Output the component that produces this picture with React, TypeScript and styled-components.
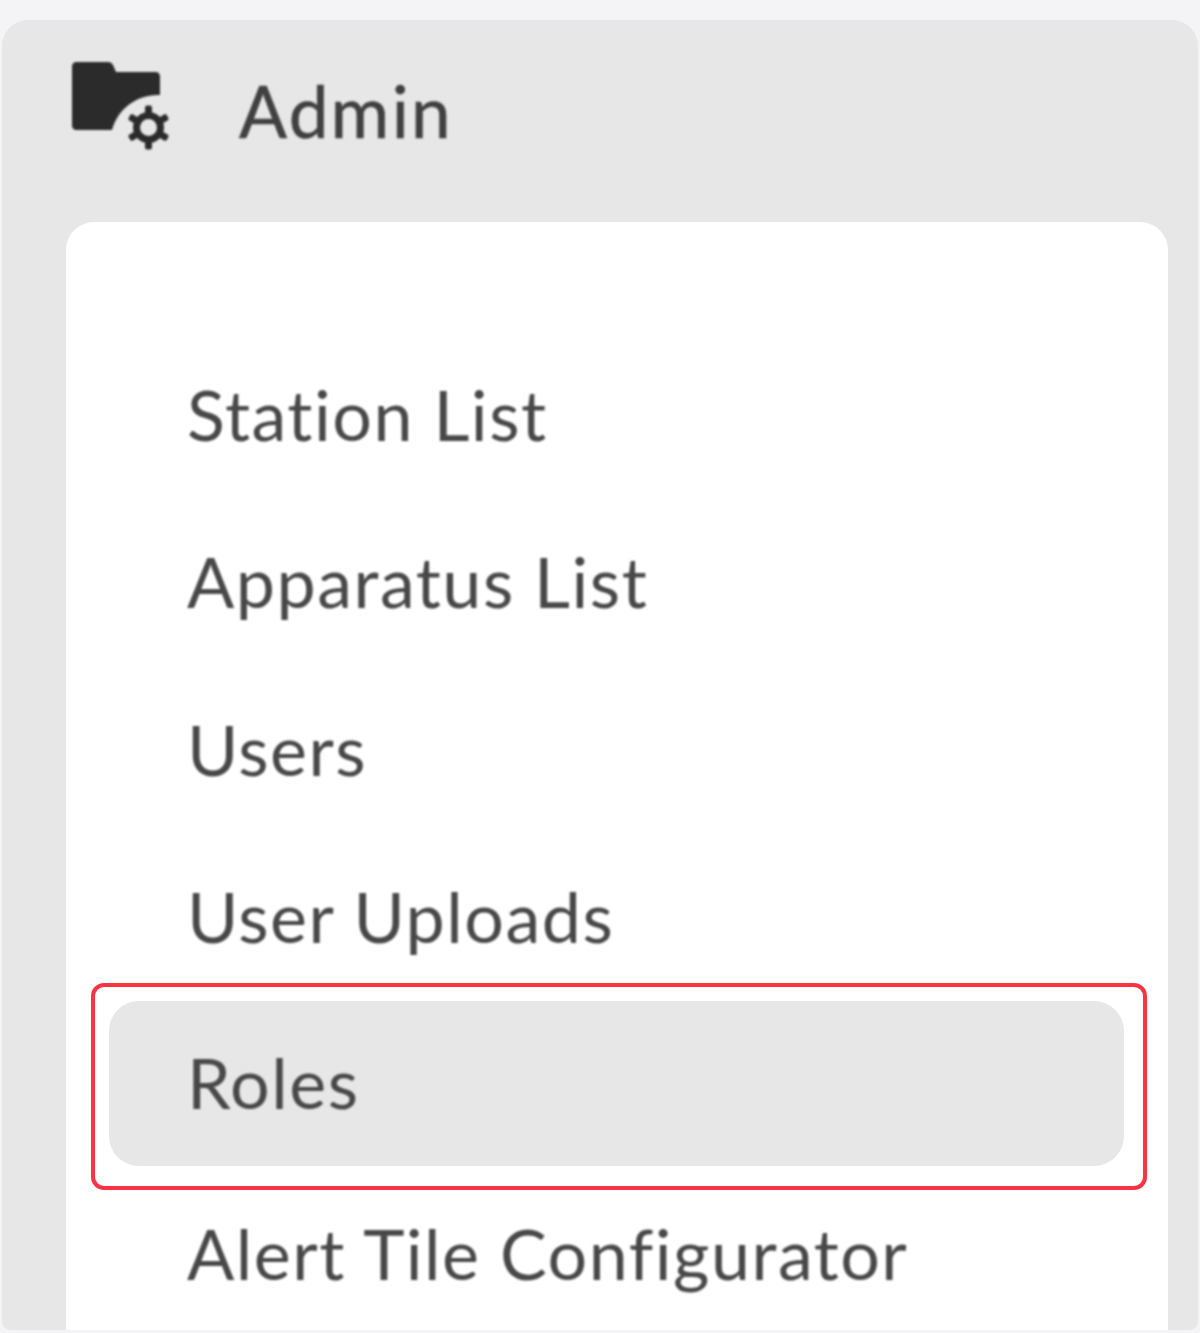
import styled, { createGlobalStyle } from "styled-components";

const GlobalStyle = createGlobalStyle`
  html, body {
    margin: 0;
    padding: 0;
    background: #f4f4f6;
  }
`;

const items = [
  "Station List",
  "Apparatus List",
  "Users",
  "User Uploads",
  "Roles",
  "Alert Tile Configurator",
];

const AdminIcon = () => (
  <IconSvg viewBox="0 0 100 100" aria-hidden="true">
    <path
      d="M4 0H36C38 0 40 1 41 3L44 10H84C86 10 88 12 88 14V33C66 32 46 46 40 68H4C2 68 0 66 0 64V4C0 2 2 0 4 0Z"
      fill="#2b2b2b"
    />
    <g transform="translate(76.5 65.5)" fill="#2b2b2b">
      <circle r="12" fill="none" stroke="#2b2b2b" strokeWidth="7" />
      {[0, 60, 120, 180, 240, 300].map((a) => (
        <rect key={a} x="-3.5" y="-22" width="7" height="8" rx="2" transform={`rotate(${a})`} />
      ))}
    </g>
  </IconSvg>
);

const App = () => {
  return (
    <>
      <GlobalStyle />
      <Page>
        <Panel>
          <Header>
            <AdminIcon />
            <Title>Admin</Title>
          </Header>
          <Card>
            {items.map((item) => (
              <Row key={item} $active={item === "Roles"}>
                <Label>{item}</Label>
                {item === "Roles" && <Highlight />}
              </Row>
            ))}
          </Card>
        </Panel>
      </Page>
    </>
  );
};

export default App;

const Page = styled.div`
  width: 1200px;
  height: 1333px;
  box-sizing: border-box;
  padding: 20px 2px 3px;
  overflow: hidden;
  font-family: Lato, "Open Sans", sans-serif;
`;

const Panel = styled.div`
  height: 100%;
  display: flex;
  flex-direction: column;
  background: #e8e7e8;
  border-radius: 26px 26px 8px 8px;
  overflow: hidden;
`;

const Header = styled.div`
  height: 202px;
  flex: none;
  display: flex;
  align-items: flex-start;
  padding: 42px 0 0 70px;
  box-sizing: border-box;
`;

const IconSvg = styled.svg`
  width: 100px;
  height: 100px;
  flex: none;
  filter: blur(0.9px);
`;

const Title = styled.div`
  margin: 7px 0 0 67px;
  font-size: 71px;
  line-height: 84px;
  letter-spacing: 2.4px;
  color: #404040;
  -webkit-text-stroke: 0.6px #404040;
  filter: blur(0.9px);
`;

const Card = styled.div`
  flex: 1;
  min-height: 0;
  margin: 0 30px 0 64px;
  padding: 109px 44px 0 43px;
  background: #fff;
  border-radius: 28px 28px 0 0;
`;

const Row = styled.div<{ $active?: boolean }>`
  position: relative;
  box-sizing: border-box;
  height: 165px;
  margin-bottom: ${(p) => (p.$active ? "4.5px" : "2.5px")};
  padding-bottom: ${(p) => (p.$active ? "4px" : "0")};
  display: flex;
  align-items: center;
  padding-left: 78px;
  border-radius: 30px;
  background: ${(p) => (p.$active ? "#e8e7e8" : "transparent")};
`;

const Label = styled.span`
  font-size: 70px;
  letter-spacing: 1.5px;
  color: #484848;
  filter: blur(0.9px);
`;

const Highlight = styled.div`
  position: absolute;
  inset: -18px -23px -24px -18px;
  border: 4px solid #fb3343;
  border-radius: 13px;
`;
